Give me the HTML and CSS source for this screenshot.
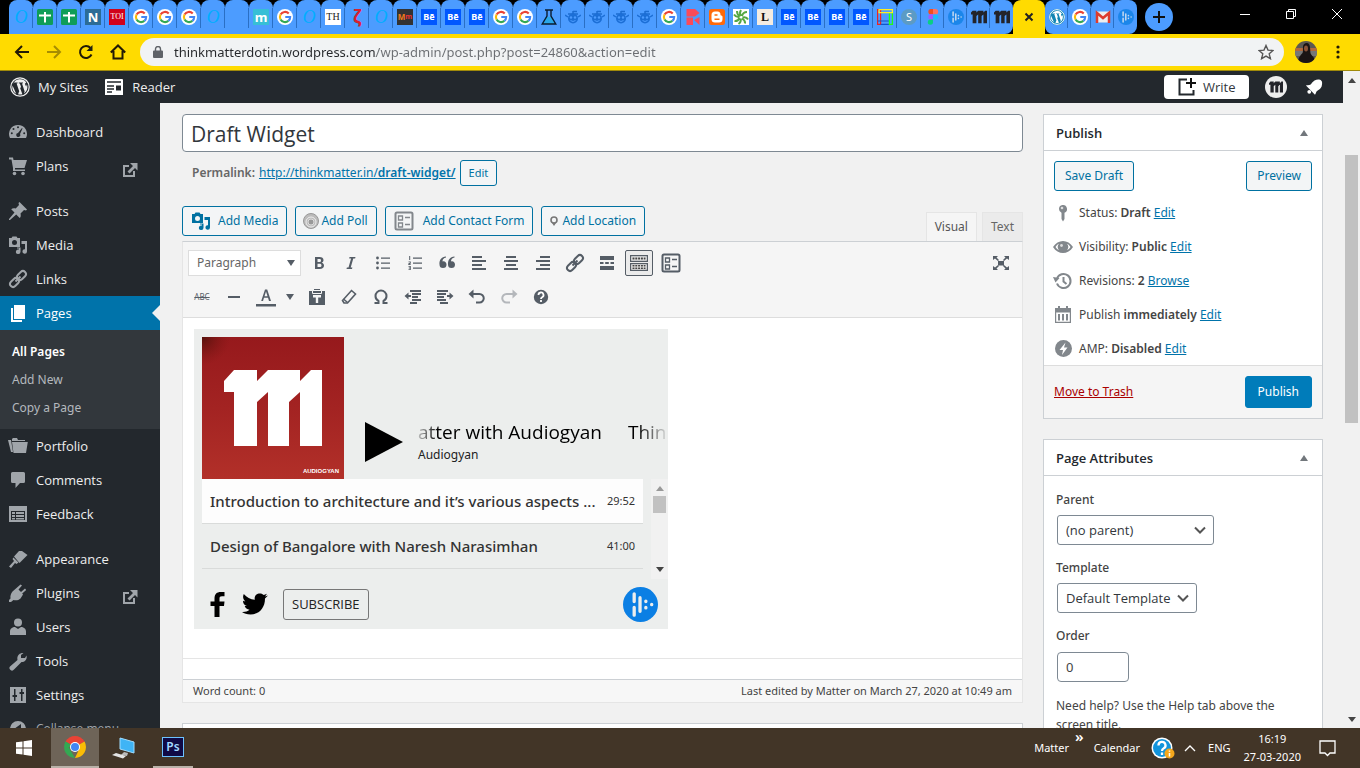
FILE: index.html
```html
<!DOCTYPE html>
<html lang="en">
<head>
<meta charset="utf-8">
<title>Edit Page</title>
<link rel="stylesheet" href="styles.css">
</head>
<body>
<svg class="sprite" aria-hidden="true">
  <symbol id="google" viewBox="0 0 18 18"><circle cx="9" cy="9" r="9" fill="#fff"/><g fill="none" stroke-width="2.4"><path d="M13.2 5A5.8 5.8 0 0 0 4 6.2" stroke="#ea4335"/><path d="M4 6.2a5.8 5.8 0 0 0 0 5.6" stroke="#fbbc05"/><path d="M4 11.8a5.8 5.8 0 0 0 8.8 1.6" stroke="#34a853"/><path d="M12.8 13.4A5.6 5.6 0 0 0 14.8 9H9.3" stroke="#4285f4"/></g></symbol>
  <symbol id="sheet" viewBox="0 0 16 16"><rect width="16" height="16" rx="1.5" fill="#0f9d58"/><path d="M2 6.500h12M8 3v10.500" stroke="#fff" stroke-width="2"/></symbol>
  <symbol id="robot" viewBox="0 0 16 16"><path d="M3 5h10M8 2.500h4M8 2v3" stroke="#1c6cd0" stroke-width="1.500"/><circle cx="8" cy="9.500" r="5" fill="#1c6fd6"/><path d="M0 6l3 2M16 6l-3 2" stroke="#1c6fd6" stroke-width="1.500"/><circle cx="6" cy="8.500" r="1.200" fill="#4c9cff"/><circle cx="10" cy="8.500" r="1.200" fill="#4c9cff"/><path d="M5.500 11.500q2.500 2 5 0" stroke="#4c9cff" fill="none"/></symbol>
  <symbol id="waves" viewBox="0 0 36 36"><circle cx="18" cy="18" r="18" fill="#0b7fe4"/><g class="wave-bars" stroke-width="3.400" stroke-linecap="round"><path d="M11.500 7v8M11.500 21v8M17.500 11v14M23.500 14.500v.5M23.500 21v.5M29.500 17.800v.4"/></g></symbol>
  <symbol id="mlogo" viewBox="22 33 98 76"><path d="M32 33h23v11l11-11h32v11l11-11h11v76H98V55L87 65v44H66V55L55 65v44H32V55H22V44z"/></symbol>
  <symbol id="wp" viewBox="0 0 20 20"><circle cx="10" cy="10" r="9.200" fill="none" stroke="currentColor" stroke-width="1.200"/><path d="M3 7.200A7.600 7.600 0 0 1 16.300 5.500C15 5.800 14.800 7 15.500 8.200c.9 1.600 1.100 2.400.4 4.600l-.9 2.600-3-9 1-.2v-.7H8.800v.7l1 .2 1.200 3.200-1.700 5-2.700-8.200 1-.2v-.7H3.600zM2.500 8.500l3.700 8.200A7.600 7.600 0 0 1 2.500 8.500zM10.200 11.200l2.200 6a8 8 0 0 1-4.300.1zM16.900 7.300c1.200 3.400.2 7.200-3 9.200z" fill="currentColor"/></symbol>
  <symbol id="media" viewBox="0 0 20 20"><path d="M1 3h2.500L4.500 1.500h4L9.500 3H12v9H1zM6.500 5a2.500 2.500 0 1 0 0 5 2.500 2.500 0 0 0 0-5z" fill="currentColor" fill-rule="evenodd"/><path d="M13.500 6H19v10.500a2.300 2.300 0 1 1-2-2.300V9h-3.500zM7 13.500h2v-1h3.500v4.300a2.300 2.300 0 1 1-1.600-2.200V13.500z" fill="currentColor"/></symbol>
  <symbol id="link" viewBox="0 0 20 20"><g fill="none" stroke="currentColor" stroke-width="2"><rect x="8.500" y="3.500" width="10" height="6" rx="3" transform="rotate(-45 13.500 6.500)"/><rect x="1.500" y="10.500" width="10" height="6" rx="3" transform="rotate(-45 6.500 13.500)"/><path d="M7.500 12.500l5-5"/></g></symbol>
  <symbol id="ext" viewBox="0 0 16 16"><path d="M7 4H2v10h10V9" fill="none" stroke="currentColor" stroke-width="2"/><path d="M8 1h7.500v7.500L13 6l-5.500 5.500-2-2L11 4z" fill="currentColor"/></symbol>
  <symbol id="form" viewBox="0 0 20 20"><rect x="1.500" y="1.500" width="17" height="17" rx="1.500" fill="none" stroke="currentColor" stroke-width="2"/><path d="M4.500 5h4v4h-4zM4.500 12h4v4h-4zM11 6.500h5M11 13.500h5" fill="none" stroke="currentColor" stroke-width="1.300"/></symbol>
  <symbol id="chev" viewBox="0 0 12 8"><path d="M1 1.500l5 5 5-5" fill="none" stroke="#555" stroke-width="2"/></symbol>
</svg>

<header class="browser">
  <nav class="tabs" aria-label="Browser tabs">
    <a class="tab" href="#"><i class="fav o">O</i></a><a class="tab" href="#"><svg class="fav"><use href="#sheet"/></svg></a><a class="tab" href="#"><svg class="fav"><use href="#sheet"/></svg></a><a class="tab" href="#"><i class="fav n">N</i></a><a class="tab" href="#"><i class="fav toi">TOI</i></a><a class="tab" href="#"><svg class="fav"><use href="#google"/></svg></a><a class="tab" href="#"><svg class="fav"><use href="#google"/></svg></a><a class="tab" href="#"><svg class="fav"><use href="#google"/></svg></a><a class="tab" href="#"><i class="fav o">O</i></a><a class="tab" href="#" aria-label="New tab"></a><a class="tab" href="#"><i class="fav em">m</i></a><a class="tab" href="#"><svg class="fav"><use href="#google"/></svg></a><a class="tab" href="#"><i class="fav o">O</i></a><a class="tab" href="#"><i class="fav th">TH</i></a><a class="tab" href="#"><i class="fav zeta">ζ</i></a><a class="tab" href="#"><i class="fav o">O</i></a><a class="tab" href="#"><i class="fav mm">M<small>m</small></i></a><a class="tab" href="#"><i class="fav be">Bē</i></a><a class="tab" href="#"><i class="fav be">Bē</i></a><a class="tab" href="#"><i class="fav be">Bē</i></a><a class="tab" href="#"><svg class="fav"><use href="#google"/></svg></a><a class="tab" href="#"><svg class="fav"><use href="#google"/></svg></a><a class="tab" href="#"><svg class="fav" viewBox="0 0 16 16"><path d="M4.500 8h7l3.500 7H1z" fill="#2aa7e8"/><path d="M4 1h8M6 1v6L1.200 15h13.600L10 7V1" fill="none" stroke="#0a1c30" stroke-width="1.400"/></svg></a><a class="tab" href="#"><svg class="fav"><use href="#robot"/></svg></a><a class="tab" href="#"><svg class="fav"><use href="#robot"/></svg></a><a class="tab" href="#"><svg class="fav"><use href="#robot"/></svg></a><a class="tab" href="#"><svg class="fav"><use href="#robot"/></svg></a><a class="tab" href="#"><svg class="fav"><use href="#google"/></svg></a><a class="tab" href="#"><svg class="fav" viewBox="0 0 16 16"><path d="M1.500 0H10l4.500 4L10 7.500H1.500zM1.500 8.500H8V16H1.500zM9 11l5.500-3v8z" fill="#fb4a59"/></svg></a><a class="tab" href="#"><svg class="fav" viewBox="0 0 16 16"><rect width="16" height="16" rx="2.500" fill="#ff6a0a"/><path d="M6 2.500h2.500A3 3 0 0 1 11.500 6c0 .8 2 0 2 2v2a3.500 3.500 0 0 1-3.500 3.500H6A3.500 3.500 0 0 1 2.500 10V6A3.500 3.500 0 0 1 6 2.500z" fill="#fff"/><path d="M5.500 6h3M5.500 10.200h5" stroke="#ff6a0a" stroke-width="1.600"/></svg></a><a class="tab" href="#"><svg class="fav" viewBox="0 0 16 16"><path fill="#fff" d="M0 0h16v16H0z"/><g fill="none" stroke="#55a842" stroke-width="2"><path d="M8 7Q6 4 8 1M9 7q1-4 5-4M9.500 8.500q4-1 5.500 2M9 9.500q3.500 2 3 5M7.500 9.500q1 3.500-2 5.500M6.500 9Q5 12.500 1.500 12M6.500 8Q3 8.500 1 5.500M7 7Q4 6 4 2"/></g></svg></a><a class="tab" href="#"><i class="fav el">L</i></a><a class="tab" href="#"><i class="fav be">Bē</i></a><a class="tab" href="#"><i class="fav be">Bē</i></a><a class="tab" href="#"><i class="fav be">Bē</i></a><a class="tab" href="#"><i class="fav be">Bē</i></a><a class="tab" href="#"><svg class="fav" viewBox="0 0 16 16" fill="none" stroke-width="1.200"><path d="M.6.6v14.800h3V.6z" stroke="#e22"/><path d="M.6 12h12M3.600 15.400h9" stroke="#15c"/><path d="M12.400 3.600h3v11.800h-3z" stroke="#2f1"/><path d="M2 .6h13.400v3H2z" stroke="#fe2"/></svg></a><a class="tab" href="#"><i class="fav es">S</i></a>
    <a class="tab narrow" href="#"><svg class="fav" viewBox="0 0 16 16"><path d="M8 0H6a2.600 2.600 0 0 0 0 5.300h2z" fill="#f24e1e"/><path d="M8 0h2.500a2.600 2.600 0 0 1 0 5.300H8z" fill="#ff7262"/><path d="M8 5.300H6a2.600 2.600 0 0 0 0 5.300h2z" fill="#a259ff"/><circle cx="10.500" cy="8" r="2.600" fill="#1abcfe"/><path d="M8 10.600H6A2.600 2.600 0 1 0 8 13z" fill="#0acf83"/></svg></a><a class="tab narrow" href="#"><svg class="fav dim"><use href="#waves"/></svg></a><a class="tab narrow" href="#"><svg class="fav dark"><use href="#mlogo"/></svg></a><a class="tab narrow last" href="#"><svg class="fav dark"><use href="#mlogo"/></svg></a>
    <a class="tab active" href="#" aria-label="Close tab"><svg class="closex" viewBox="0 0 10 10"><path d="M1.500 1.500l7 7M8.500 1.500l-7 7" stroke="#222" stroke-width="2"/></svg></a>
    <a class="tab narrow first" href="#"><i class="fav wpfav"><svg viewBox="0 0 20 20"><use href="#wp"/></svg></i></a><a class="tab narrow" href="#"><svg class="fav"><use href="#google"/></svg></a><a class="tab narrow" href="#"><svg class="fav" viewBox="0 0 16 16"><path d="M1 2.500h14v11H1z" fill="#eee"/><path d="M2 14V4l6 5 6-5v10" fill="none" stroke="#dd3b2e" stroke-width="2.500"/></svg></a><a class="tab narrow last" href="#"><svg class="fav dim"><use href="#waves"/></svg></a>
    <button class="newtab" aria-label="New tab"><svg viewBox="0 0 12 12"><path d="M6 0v12M0 6h12" stroke="#111" stroke-width="2"/></svg></button>
    <div class="winctl">
      <button aria-label="Minimize"><svg viewBox="0 0 12 12"><path d="M1 6.500h10"/></svg></button>
      <button aria-label="Restore"><svg viewBox="0 0 12 12"><path d="M1.500 3.500h7v7h-7zM3.500 3.500v-2h7v7h-2"/></svg></button>
      <button aria-label="Close"><svg viewBox="0 0 12 12"><path d="M1 1l10 10M11 1L1 11"/></svg></button>
    </div>
  </nav>
  <div class="navbar">
    <button aria-label="Back"><svg viewBox="0 0 16 16"><path d="M15 8H2M8 2L2 8l6 6"/></svg></button>
    <button class="off" aria-label="Forward"><svg viewBox="0 0 16 16"><path d="M1 8h13M8 2l6 6-6 6"/></svg></button>
    <button aria-label="Reload"><svg viewBox="0 0 16 16"><path d="M13.500 10.500A6 6 0 1 1 12.500 4"/><path d="M14.500 1v6h-6z" fill="#221" stroke="none"/></svg></button>
    <button aria-label="Home"><svg viewBox="0 0 16 16"><path d="M.8 8.500L8 1.500l7.200 7M3.500 7v7.500h9V7"/></svg></button>
    <div class="omnibox">
      <svg class="lock" viewBox="0 0 10 12"><path d="M1 4.500h8a1 1 0 0 1 1 1V11a1 1 0 0 1-1 1H1a1 1 0 0 1-1-1V5.500a1 1 0 0 1 1-1z" fill="#5f6368"/><path d="M2.500 5V3a2.500 2.500 0 0 1 5 0v2" fill="none" stroke="#5f6368" stroke-width="1.400"/></svg>
      <input class="url" aria-label="Address" value="thinkmatterdotin.wordpress.com/wp-admin/post.php?post=24860&amp;action=edit">
      <button class="star" aria-label="Bookmark"><svg viewBox="0 0 16 16"><path d="M8 1.500l2 4.600 5 .4-3.800 3.300 1.200 4.900L8 12.100l-4.400 2.600 1.200-4.900L1 6.500l5-.4z" fill="none" stroke="#555" stroke-width="1.400"/></svg></button>
    </div>
    <svg class="avatar" viewBox="0 0 22 22"><defs><clipPath id="av"><circle cx="11" cy="11" r="11"/></clipPath></defs><g clip-path="url(#av)"><path fill="#5c5852" d="M0 0h22v22H0z"/><path fill="#b3683a" d="M0 7h22v4H0z"/><path fill="#777" d="M0 10h22v5H0z"/><path fill="#1b1414" d="M3 22c0-6 3-8 4.500-10S6 3 11 2s4 7 4.500 10S20 15 20 22z"/><ellipse cx="11" cy="7.500" rx="2" ry="3" fill="#8b5237"/></g></svg>
    <button class="dots" aria-label="Menu"><svg viewBox="0 0 4 16"><circle cx="2" cy="3" r="1.600"/><circle cx="2" cy="8" r="1.600"/><circle cx="2" cy="13" r="1.600"/></svg></button>
  </div>
</header>

<div class="page">
<div class="site">
  <div class="adminbar">
    <a href="#"><svg class="ab-icon"><use href="#wp"/></svg>My Sites</a>
    <a href="#"><svg class="ab-icon reader" viewBox="0 0 18 16"><path d="M0 1q0-1 1-1h16q1 0 1 1v15H0z" fill="#fff"/><path d="M2 3h14M2 7h7M2 10h7M2 13h5" stroke="#23282d" stroke-width="1.300"/><path d="M11 6.500h5v5h-5z" fill="#23282d"/></svg>Reader</a>
    <a class="write" href="#"><svg viewBox="0 0 18 18"><path d="M9 1.500H1.500v15h14V12" fill="none" stroke="#23282d" stroke-width="2"/><path d="M13 0v10M8 5h10" stroke="#111" stroke-width="2"/></svg>Write</a>
    <a class="me" href="#" aria-label="Profile"><svg class="dark"><use href="#mlogo"/></svg></a>
    <a class="bell" href="#" aria-label="Notifications"><svg viewBox="0 0 20 20"><path d="M1 8l9.500 9.500c1-1 .8-2 1.500-3 1-1.500 4-2 5.500-5.500C18.500 5 18 3.500 17 2.500S13 1 10 2.500C7.500 4 7 6 5.500 7 4.200 7.800 2 7 1 8z" fill="#fff"/><circle cx="4.500" cy="14.500" r="2" fill="#fff"/></svg></a>
  </div>
  <div class="columns">
  <nav class="menu" aria-label="Main menu">
    <a href="#"><svg viewBox="0 0 20 20"><path fill-rule="evenodd" d="M2 16A9 9 0 1 1 18 16zM10 4.200a1 1 0 1 0 0 2 1 1 0 0 0 0-2zM5.500 6a1 1 0 1 0 0 2 1 1 0 0 0 0-2zM3.800 10.200a1 1 0 1 0 0 2 1 1 0 0 0 0-2zM16.200 10.200a1 1 0 1 0 0 2 1 1 0 0 0 0-2zM14 6l-4 5a2 2 0 1 0 2 1l2.500-5.500z"/></svg>Dashboard</a>
    <a href="#"><svg viewBox="0 0 20 20"><path d="M1 1.500h4L5.500 4H19l-2.500 8H7v1.500h10v1.500H5V12L3.500 3.500H1z"/><circle cx="6.500" cy="17.500" r="1.800"/><circle cx="15" cy="17.500" r="1.800"/></svg>Plans<svg class="out"><use href="#ext"/></svg></a>
    <hr>
    <a href="#"><svg viewBox="0 0 20 20"><path d="M11.500 1l7.500 7.500-1 1-2-.5-3.500 3.500c.5 2 .3 3.500-.8 4.500l-3.500-3.500L2 19H1v-1l5.500-6.500L3.200 8.200c1-1 2.500-1.300 4.500-.8L11 4l-.5-2z"/></svg>Posts</a>
    <a href="#"><svg><use href="#media"/></svg>Media</a>
    <a href="#"><svg><use href="#link"/></svg>Links</a>
    <a class="current" href="#"><svg viewBox="0 0 20 20"><path d="M6 2h11v14H6zM3 5h2v12h9v2H3z"/></svg>Pages</a>
    <div class="submenu"><a class="on" href="#">All Pages</a><a href="#">Add New</a><a href="#">Copy a Page</a></div>
    <a href="#"><svg viewBox="0 0 20 20"><path d="M0 4h3l.5 3L5 16H3zM4 6h15.800L18 17H5.500zM4 5V3l1-1h4l1 2h7v1z"/></svg>Portfolio</a>
    <a href="#"><svg viewBox="0 0 20 20"><path d="M4.500 2h11Q17 2 17 3.500v8q0 1.500-1.500 1.500H12l-4.500 5V13h-3Q3 13 3 11.500v-8Q3 2 4.500 2z"/></svg>Comments</a>
    <a href="#"><svg viewBox="0 0 20 20"><path fill-rule="evenodd" d="M1 2h18v16H1zM3 7h14v9H3z"/><path d="M4 8h3v2H4zM8 8h8v2H8zM4 11h3v2H4zM8 11h8v2H8zM4 14h3v1.500H4zM8 14h8v1.500H8z"/></svg>Feedback</a>
    <hr>
    <a href="#"><svg viewBox="0 0 20 20"><path d="M14 2l5.500 4-8 8L6 7.500 11 2zM5.500 8.500l5 5-2 1.500-1.500-1L3 19 1 17.500 6 12 4.500 10z"/></svg>Appearance</a>
    <a href="#"><svg viewBox="0 0 20 20"><path d="M12.500 1.500l1.500 1-3.500 4 2.500 2.500 4-3.500 1.200 1.500-4 3.500.8 1-2.500 4c-2 2-5 2-7 1.500L3 19H1v-2l1.500-1.500C2 13 3 10 4.500 8.500L8.500 5z"/></svg>Plugins<svg class="out"><use href="#ext"/></svg></a>
    <a href="#"><svg viewBox="0 0 20 20"><circle cx="10" cy="5.500" r="4"/><path d="M2 18v-3.500c0-3 2.500-4.500 5-4.500l3 2 3-2c2.500 0 5 1.500 5 4.500V18z"/></svg>Users</a>
    <a href="#"><svg viewBox="0 0 20 20"><path d="M17 7l1.500-2.500c.8 3-1 6.500-5 6.500l-7.500 7.500a2.200 2.200 0 0 1-4-3L9.500 9C8.500 4.500 12 1.500 15.500 2L13 4v3z"/></svg>Tools</a>
    <a href="#"><svg viewBox="0 0 20 20"><path fill-rule="evenodd" d="M2 2h16v16H2zM6 4v6H4.500v2H6v4h1.500v-4H9v-2H7.500V4zM13 4v3h-1.500v2H13v7h1.500V9H16V7h-1.500V4z"/></svg>Settings</a>
    <a class="collapse" href="#"><svg viewBox="0 0 20 20"><path fill-rule="evenodd" d="M10 2a8 8 0 1 1 0 16 8 8 0 0 1 0-16zM13 5v10l-7-5z"/></svg>Collapse menu</a>
  </nav>

  <main class="content">
    <section class="primary">
      <input class="title" aria-label="Title" value="Draft Widget">
      <div class="permalink"><b>Permalink:</b> <a href="#">http://thinkmatter.in/<b>draft-widget/</b></a> <button class="btn small">Edit</button></div>
      <div class="tools">
        <div class="inserts">
          <button class="btn"><svg class="i20"><use href="#media"/></svg>Add Media</button>
          <button class="btn"><svg class="i16" viewBox="0 0 16 16"><circle cx="8" cy="8" r="7.500" fill="#bbb" stroke="#999"/><circle cx="8" cy="9" r="5" fill="none" stroke="#eee"/><circle cx="8" cy="9" r="3" fill="#999" stroke="#ddd"/></svg>Add Poll</button>
          <button class="btn"><svg class="i20 grey"><use href="#form"/></svg>Add Contact Form</button>
          <button class="btn"><svg class="i8" viewBox="0 0 8 10"><circle cx="4" cy="4" r="3" fill="none" stroke="#777" stroke-width="1.600"/><path d="M2 7l2 3 2-3z" fill="#777"/></svg>Add Location</button>
        </div>
        <div class="modes"><button class="mode on">Visual</button><button class="mode">Text</button></div>
      </div>
      <div class="editor">
        <div class="toolbar">
          <div class="row">
            <span class="pick para"><select aria-label="Block format"><option>Paragraph</option></select><svg viewBox="0 0 8 6"><path d="M0 0h8L4 6z"/></svg></span>
            <button aria-label="Bold"><svg viewBox="0 0 20 20"><path d="M6 4v12h4.500c3 0 4.500-1.200 4.500-3.400 0-1.700-1-2.600-2.300-2.900 1.100-.4 1.800-1.300 1.800-2.600C14.500 5 13 4 10.500 4zm2.500 2h1.700c1.200 0 1.800.4 1.800 1.400S11.400 9 10.200 9H8.500zm0 4.800h2c1.400 0 2 .5 2 1.600s-.7 1.700-2 1.700h-2z" fill-rule="evenodd"/></svg></button>
            <button aria-label="Italic"><svg viewBox="0 0 20 20"><path d="M8.500 4h6l-.4 1.600h-1.800L9.700 14.400h1.700L11 16H5.500l.4-1.600h1.600l2.600-8.800H8.200z"/></svg></button>
            <button aria-label="Bulleted list"><svg viewBox="0 0 20 20"><circle cx="4.500" cy="5" r="1.400"/><circle cx="4.500" cy="10" r="1.400"/><circle cx="4.500" cy="15" r="1.400"/><path d="M8 4.500h9v1.200H8zM8 9.500h9v1.200H8zM8 14.500h9v1.200H8z"/></svg></button>
            <button aria-label="Numbered list"><svg viewBox="0 0 20 20"><path d="M8 4.500h9v1.200H8zM8 9.500h9v1.200H8zM8 14.500h9v1.200H8zM4.200 3h1v4h-1zM3.500 8.500h2.300v2L4.500 11.200h1.300v.8H3.300v-1.400l1.600-.8v-.5H3.500zM3.500 13h2.300v4H3.500v-.8h1.400v-.8H3.800v-.8h1.100v-.8H3.500z"/></svg></button>
            <button aria-label="Blockquote"><svg viewBox="0 0 20 20"><path d="M9 4.500C6.500 5 5.500 6.500 5.500 8.500c2-.8 4 .8 4 3a3.500 3.500 0 0 1-7 0C2 7 4.500 4 9 3.500zM17.500 4.500C15 5 14 6.500 14 8.500c2-.8 4 .8 4 3a3.500 3.500 0 0 1-7 0c-.3-4.500 2-7.500 6.500-8z"/></svg></button>
            <button aria-label="Align left"><svg viewBox="0 0 20 20"><path d="M3 3h10v2H3zM3 7h14v2H3zM3 11h10v2H3zM3 15h14v2H3z"/></svg></button>
            <button aria-label="Align center"><svg viewBox="0 0 20 20"><path d="M5 3h10v2H5zM3 7h14v2H3zM5 11h10v2H5zM3 15h14v2H3z"/></svg></button>
            <button aria-label="Align right"><svg viewBox="0 0 20 20"><path d="M7 3h10v2H7zM3 7h14v2H3zM7 11h10v2H7zM3 15h14v2H3z"/></svg></button>
            <button aria-label="Insert link"><svg><use href="#link"/></svg></button>
            <button aria-label="Read more"><svg viewBox="0 0 20 20"><path d="M3 3h14v4H3zM3 13h14v4H3zM3 9h3.500v2H3zM8.200 9h3.600v2H8.200zM13.500 9H17v2h-3.500z"/></svg></button>
            <button class="pressed" aria-label="Toolbar toggle"><svg viewBox="0 0 20 20"><path fill-rule="evenodd" d="M1 2h18v7H1zM2.200 3.200v4.600h15.600V3.200zM1 10h18v8H1zM2.200 11.200v5.600h15.600v-5.600z"/><path d="M3.500 5.500h13" stroke="#444" stroke-width="2" stroke-dasharray="2 .8"/><path d="M3.500 12.800h13M3.500 15.300h13" stroke="#444" stroke-width="1.600" stroke-dasharray="2 .8"/></svg></button>
            <button aria-label="Contact form"><svg><use href="#form"/></svg></button>
            <button class="end" aria-label="Fullscreen"><svg viewBox="0 0 20 20"><path d="M7 8h6v4.500H7zM2 3h5L5.500 4.500 8 7 7 8 4 5.500 2 7zM18 3h-5l1.500 1.500L12 7l1 1 3-2.500L18 7zM2 17h5l-1.500-1.500L8 13l-1-1-3 2.500L2 13zM18 17h-5l1.500-1.500L12 13l1-1 3 2.500 2-1.500z"/></svg></button>
          </div>
          <div class="row">
            <button class="abc" aria-label="Strikethrough"><s>ABC</s></button>
            <button aria-label="Horizontal line"><svg viewBox="0 0 20 20"><path d="M4 9h12v2H4z"/></svg></button>
            <button aria-label="Text color"><svg viewBox="0 0 20 20"><path d="M9 2.500h2.200L15 14h-2l-1-3.200H8L7 14H5.200zm1 2L8.500 9.300h3z" fill-rule="evenodd"/><path d="M0 17h20v2.500H0z"/></svg></button>
            <button class="thin" aria-label="Color menu"><svg viewBox="0 0 8 6"><path d="M0 0h8L4 6z"/></svg></button>
            <button aria-label="Paste as text"><svg viewBox="0 0 20 20"><path fill-rule="evenodd" d="M7 2h6v2h5v14H2V4h5zM6 8v2.500h2.800V16h2.400v-5.500H14V8z"/><path d="M5.500 3.500h9v3h-9z" stroke="#f5f5f5"/></svg></button>
            <button aria-label="Clear formatting"><svg viewBox="0 0 20 20"><path d="M12.500 3.500l4 3.500-8 9H5l-1.500-2.500z" fill="none" stroke="#555d66" stroke-width="1.600"/><path d="M4.500 12l4 3.500" fill="none" stroke="#555d66" stroke-width="1.500"/></svg></button>
            <button aria-label="Special character"><svg viewBox="0 0 20 20"><path d="M3.500 16h4v-2C5.500 13 4.500 11.500 4.500 9a5.500 5.500 0 0 1 11 0c0 2.500-1 4-3 5v2h4" fill="none" stroke="#555d66" stroke-width="2"/></svg></button>
            <button aria-label="Outdent"><svg viewBox="0 0 20 20"><path d="M7 3h11v2H7zM9 6h9v2H9zM9 9h6v2H9zM9 12h9v2H9zM7 15h7v2H7zM5.500 5.500V8H8v2H5.500v2.500L1.500 9z"/></svg></button>
            <button aria-label="Indent"><svg viewBox="0 0 20 20"><path d="M2 3h11v2H2zM2 6h9v2H2zM2 9h7v2H2zM2 12h9v2H2zM5 15h8v2H5zM14.500 5.500V8H12v2h2.500v2.500l4-3.500z"/></svg></button>
            <button aria-label="Undo"><svg viewBox="0 0 20 20"><path d="M6.500 2.500v9L1.500 7z"/><path d="M5 7h7.500a4.200 4.200 0 1 1 0 8.500H9" fill="none" stroke="#555d66" stroke-width="2"/></svg></button>
            <button class="faded" aria-label="Redo"><svg viewBox="0 0 20 20"><path d="M13.500 2.500v9l5-4.500z"/><path d="M15 7H7.500a4.200 4.200 0 1 0 0 8.500H11" fill="none" stroke="#555d66" stroke-width="2"/></svg></button>
            <button aria-label="Help"><svg viewBox="0 0 20 20"><circle cx="10" cy="10" r="7.200"/><path d="M7.500 8a2.500 2.500 0 1 1 3.600 2.200c-.8.400-1.100.8-1.100 1.800M10 13v2" fill="none" stroke="#fff" stroke-width="1.800"/></svg></button>
          </div>
        </div>
        <div class="canvas">
          <article class="widget">
            <div class="player">
              <svg class="art" viewBox="0 0 142 142"><defs><linearGradient id="red" x1="0" y1="0" x2="0" y2="1"><stop offset="0" stop-color="#96191c"/><stop offset=".5" stop-color="#a32322"/><stop offset="1" stop-color="#b23029"/></linearGradient><radialGradient id="shade" cx="0" cy="0" r=".2"><stop offset="0" stop-color="#451109" stop-opacity=".8"/><stop offset="1" stop-color="#7a1512" stop-opacity="0"/></radialGradient></defs><path fill="url(#red)" d="M0 0h142v142H0z"/><path fill="url(#shade)" d="M0 0h142v142H0z"/><path fill="#fff" d="M32 33h23v11l11-11h32v11l11-11h11v76H98V55L87 65v44H66V55L55 65v44H32V55H22V44z"/><text x="137" y="136" text-anchor="end">AUDIOGYAN</text></svg>
              <button class="play" aria-label="Play"><svg viewBox="0 0 38 40"><path d="M0 0l38 20L0 40z"/></svg></button>
              <div class="now"><div class="marquee"><span>atter with Audiogyan</span><span>Thin</span></div><div class="by">Audiogyan</div></div>
            </div>
            <div class="episodes">
              <div class="list">
                <a class="ep on" href="#"><span>Introduction to architecture and it’s various aspects ...</span><time>29:52</time></a>
                <a class="ep" href="#"><span>Design of Bangalore with Naresh Narasimhan</span><time>41:00</time></a>
              </div>
              <div class="sbar"><svg viewBox="0 0 8 5"><path d="M0 5h8L4 0z" fill="#999"/></svg><i></i><svg class="down" viewBox="0 0 8 5"><path d="M0 0h8L4 5z" fill="#444"/></svg></div>
            </div>
            <div class="share">
              <a href="#" aria-label="Facebook"><svg class="fb" viewBox="0 0 14 25"><path d="M4 25V14H0V9.500h4V6.500C4 2 6.500 0 10 0h4v4.300h-2.500C9.500 4.300 9 5 9 6.500v3h5L13.500 14H9v11z"/></svg></a>
              <a href="#" aria-label="Twitter"><svg class="tw" viewBox="0 0 26 22"><path d="M26 2.500l-3 3C23 15 17 21.500 8.500 21.500 5 21.500 2 20.500 0 19c3 .2 5.500-.5 7.500-2.200-2.500-.2-4-1.500-4.800-3.700h2.200C2.500 12.300 1 10.500 1 7.700l2.300.7C1 6.500.5 3.500 1.800 1c3 3.500 6.500 5.400 11 5.700C12 3 14.500.4 18 .4c1.500 0 2.800.6 3.800 1.600L25 .8l-2 2.600z"/></svg></a>
              <button class="subscribe">SUBSCRIBE</button>
              <svg class="brand"><use href="#waves"/></svg>
            </div>
          </article>
        </div>
        <div class="path"></div>
        <div class="status"><span>Word count: 0</span><span>Last edited by Matter on March 27, 2020 at 10:49 am</span></div>
      </div>
      <div class="box nextbox"></div>
    </section>

    <aside class="side">
      <section class="box">
        <h2>Publish<svg viewBox="0 0 8 6"><path d="M0 6h8L4 0z"/></svg></h2>
        <div class="pub">
          <div class="split"><button class="btn">Save Draft</button><button class="btn">Preview</button></div>
          <ul class="facts">
            <li><svg viewBox="0 0 20 20"><path d="M6 6a4 4 0 1 1 5.500 3.700V16L10 18.500 8.500 16V9.700A4 4 0 0 1 6 6z"/><circle cx="9" cy="5" r="1.300" fill="#ddd"/></svg>Status:&nbsp;<b>Draft</b>&nbsp;<a href="#">Edit</a></li>
            <li><svg viewBox="0 0 20 20"><path fill-rule="evenodd" d="M0 10c5-8 15-8 20 0-5 8-15 8-20 0zm2.500 0c1 1.500 2 2.500 3.500 3.200a5 5 0 0 1 0-6.400C4.500 7.500 3.500 8.500 2.500 10zm15 0c-1-1.500-2-2.500-3.500-3.200a5 5 0 0 1 0 6.400c1.500-.7 2.500-1.700 3.500-3.200z"/><circle cx="8.500" cy="8.500" r="1.400" fill="#ddd"/></svg>Visibility:&nbsp;<b>Public</b>&nbsp;<a href="#">Edit</a></li>
            <li><svg viewBox="0 0 20 20"><path d="M4 12.500a7 7 0 1 0 0-5M10.500 6v4.500l3 2.500" fill="none" stroke="#82878c" stroke-width="2"/><path d="M0 6l6.500 1-4 4.500z"/></svg>Revisions:&nbsp;<b>2</b>&nbsp;<a href="#">Browse</a></li>
            <li><svg viewBox="0 0 20 20"><path fill-rule="evenodd" d="M2 3h3V1h2v2h6V1h2v2h3v15H2zm1.200 4.500v9.300h13.600V7.500z"/><path d="M5 9h2v6.500H5zM9 9h2v6.500H9zM13 9h2v6.500h-2z"/></svg>Publish&nbsp;<b>immediately</b>&nbsp;<a href="#">Edit</a></li>
            <li><svg viewBox="0 0 20 20"><circle cx="10.500" cy="9.500" r="8.500"/><path d="M12.500 3.500L6.500 11H10l-1 5 5.500-7.500H11z" fill="#fff"/></svg>AMP:&nbsp;<b>Disabled</b>&nbsp;<a href="#">Edit</a></li>
          </ul>
        </div>
        <div class="actions"><a class="trash" href="#">Move to Trash</a><button class="btn primary-btn">Publish</button></div>
      </section>
      <section class="box">
        <h2>Page Attributes<svg viewBox="0 0 8 6"><path d="M0 6h8L4 0z"/></svg></h2>
        <div class="attrs">
          <label for="parent">Parent</label>
          <span class="pick wide"><select id="parent"><option>(no parent)</option></select><svg><use href="#chev"/></svg></span>
          <label for="tpl">Template</label>
          <span class="pick"><select id="tpl"><option>Default Template</option></select><svg><use href="#chev"/></svg></span>
          <label for="order">Order</label>
          <input id="order" class="order" value="0">
          <p>Need help? Use the Help tab above the screen title.</p>
        </div>
      </section>
    </aside>
  </main>
  </div>
</div>
<div class="scroll"><svg viewBox="0 0 8 5"><path d="M0 5h8L4 0z"/></svg><i></i><svg class="down" viewBox="0 0 8 5"><path d="M0 0h8L4 5z"/></svg></div>
</div>

<footer class="taskbar">
  <button class="start" aria-label="Start"><svg viewBox="0 0 16 16"><path d="M0 2.300L6.500 1.400v6.100H0zM7.500 1.200L16 0v7.500H7.500zM0 8.500h6.500v6.100L0 13.700zM7.500 8.500H16V16l-8.500-1.200z" fill="#fff"/></svg></button>
  <button class="task live" aria-label="Chrome"><svg viewBox="0 0 22 22"><path d="M11 11L1.500 5.500A11 11 0 0 1 20.500 5.500z" fill="#ea4335"/><path d="M11 11H1V5.500L1.500 5.500 6 13.500 11 22A11 11 0 0 1 1.500 5.500z" fill="#34a853"/><path d="M11 11l9.500-5.500A11 11 0 0 1 11 22l4-8.500z" fill="#fbbc05"/><path d="M11 6h9.700a11 11 0 0 0-.2-.5L11 3z" fill="#ea4335"/><circle cx="11" cy="11" r="5" fill="#fff"/><circle cx="11" cy="11" r="4" fill="#4285f4"/></svg></button>
  <button class="task" aria-label="This PC"><svg class="pc" viewBox="0 0 24 22"><path d="M8 1l14 4v11L8 12z" fill="#3fb4f5" stroke="#9fdcff"/><path d="M12 15l4 1-1 3-6-1z" fill="#bbb"/><path d="M4 16l10 3-3 2.500L0 18z" fill="#e4e4e4"/></svg></button>
  <button class="task ps" aria-label="Photoshop"><span>Ps</span></button>
  <span class="spring"></span>
  <a href="#">Matter</a><span class="more">»</span>
  <a href="#">Calendar</a>
  <svg class="help" viewBox="0 0 24 22"><circle cx="11" cy="11" r="10.500" fill="#fff"/><circle cx="11" cy="11" r="9" fill="#1294dc"/><path d="M7.500 8.500a3.500 3.500 0 1 1 5 3c-1 .5-1.500 1.200-1.500 2.500M11 15.500V18" fill="none" stroke="#fff" stroke-width="2.300"/><circle cx="18.500" cy="16.500" r="5" fill="#f5a71c"/><path d="M18.500 13.500v1.200M18.500 16v3.500" stroke="#fff" stroke-width="1.500"/></svg>
  <svg class="up" viewBox="0 0 12 8"><path d="M1 7l5-5 5 5" fill="none" stroke="#fff" stroke-width="1.300"/></svg>
  <span>ENG</span>
  <time class="clock">16:19<br>27-03-2020</time>
  <svg class="note" viewBox="0 0 17 17"><path d="M1 1h15v12h-5l-2.500 2.500L6 13H1z" fill="none" stroke="#fff" stroke-width="1.300"/></svg>
</footer>
</body>
</html>
```

FILE: styles.css
```css
* { box-sizing: border-box; }
body { margin: 0; height: 100vh; overflow: hidden; display: flex; flex-direction: column; font: 12px/20px "Noto Sans", "Open Sans", sans-serif; color: #444; background: #f1f1f1; }
button, input, select { font: inherit; color: inherit; margin: 0; }
button { padding: 0; border: 0; background: none; }
svg { flex: none; }
b { font-weight: 600; }
a { color: #0073aa; }
.sprite { position: absolute; width: 0; height: 0; }

/* browser frame */
.browser { flex: none; background: #000; }
.tabs { display: flex; height: 34px; padding-left: 9px; background: #000; }
.tab { flex: none; width: 24px; height: 34px; display: flex; align-items: center; justify-content: center; background: #4c9cff; border-radius: 8px 8px 0 0; text-decoration: none; background-image: linear-gradient(#2a6fc4, #2a6fc4); background-size: 1px 20px; background-repeat: no-repeat; background-position: right 8px; }
.tab.narrow { width: 23px; }
.tab.last { background-image: none; border-bottom-right-radius: 8px; }
.tab.first { border-bottom-left-radius: 8px; }
.tab.active { width: 32px; background: #ffdb00; }
.fav { width: 16px; height: 16px; flex: none; display: flex; align-items: center; justify-content: center; font-style: normal; font-weight: 700; line-height: 16px; }
.closex { width: 10px; height: 10px; }
.fav.o { font: italic 18px/20px "Liberation Serif", serif; color: #00aeff; }
.fav.n { background: #2c6c96; color: #fff; font-size: 13px; }
.fav.toi { background: #d0021b; color: #fff; font: 8px/16px "Liberation Serif", serif; }
.fav.em { background: #37bfd6; color: #fff; font-size: 13px; }
.fav.th { background: #fff; color: #222; font: 10px/16px "Liberation Serif", serif; }
.fav.zeta { color: #d8202f; font-size: 17px; line-height: 24px; }
.fav.mm { background: #333; color: #f27a1a; font-size: 8px; }
.fav.mm small { font-size: 7px; color: #e33; }
.fav.be { background: #0057ff; color: #fff; font-size: 9px; }
.fav.el { background: #f4ece1; color: #111; font: bold 12px/16px "Liberation Serif", serif; }
.fav.es { background: #5c9bc5; color: #fff; font-size: 11px; border-radius: 8px; font-weight: 400; }
.fav.wpfav { background: #1286b3; color: #fff; border-radius: 8px; }
.wpfav svg { width: 16px; height: 16px; }
.wave-bars { fill: none; stroke: #eceeed; }
.dim { opacity: .75; }
.dark { fill: #23242a; }
.newtab { width: 28px; height: 28px; margin: 3px 0 0 8px; border-radius: 14px; background: #4c9cff; display: grid; place-items: center; }
.newtab svg { width: 12px; height: 12px; }
.winctl { margin-left: auto; display: flex; height: 28px; }
.winctl button { width: 46px; display: grid; place-items: center; }
.winctl svg { width: 12px; height: 12px; fill: none; stroke: #fff; }
.navbar { display: flex; align-items: center; height: 37px; padding: 0 12px 0 6px; background: #ffdb00; border-bottom: 1px solid #a08a0a; }
.navbar button { width: 32px; height: 28px; display: grid; place-items: center; }
.navbar svg { width: 16px; height: 16px; fill: none; stroke: #221a05; stroke-width: 2; }
.navbar .off { opacity: .4; }
.omnibox { flex: 1; display: flex; align-items: center; height: 28px; margin-left: 6px; padding-left: 13px; background: #f1f3f4; border-radius: 14px; }
.omnibox .lock { width: 10px; height: 12px; stroke: none; }
.url { flex: 1; min-width: 0; height: 26px; margin-left: 11px; padding: 0; border: 0; outline: 0; font-size: 13px; -webkit-text-fill-color: transparent; background: linear-gradient(90deg, #26282b 202px, #6b6e72 202px); -webkit-background-clip: text; background-clip: text; }
.navbar .star { width: 36px; }
.navbar .avatar { width: 22px; height: 22px; margin-left: 11px; stroke: none; }
.navbar .dots { width: 20px; margin-left: 11px; }
.navbar .dots svg { width: 4px; fill: #221a05; stroke: none; }

/* page frame */
.page { flex: 1; min-height: 0; display: flex; overflow: hidden; }
.site { flex: 1; min-width: 0; display: flex; flex-direction: column; }
.scroll { flex: none; width: 17px; background: #f1f1f1; display: flex; flex-direction: column; align-items: center; padding: 7px 0 6px; }
.scroll svg { width: 8px; height: 5px; fill: #444; }
.scroll i { width: 13px; height: 268px; margin-top: 72px; background: #c1c1c1; }
.scroll .down { margin-top: auto; }
.adminbar { flex: none; display: flex; align-items: center; height: 32px; padding: 0 19px 0 10px; background: #23282d; font: 13px/20px "Open Sans", sans-serif; }
.adminbar a { display: flex; align-items: center; color: #eee; text-decoration: none; margin-right: 17px; }
.ab-icon { width: 20px; height: 20px; margin-right: 8px; }
.ab-icon.reader { width: 18px; height: 16px; margin-right: 9px; }
.adminbar .write { margin-left: auto; margin-right: 16px; width: 85px; height: 24px; padding-left: 14px; gap: 7px; background: #fff; border-radius: 4px; color: #32373c; }
.write svg { width: 18px; height: 18px; }
.adminbar .me { width: 22px; height: 22px; margin-right: 18px; justify-content: center; border-radius: 11px; background: #eee; }
.me svg { width: 14px; height: 12px; }
.adminbar .bell { margin: 0; }
.bell svg { width: 19px; height: 19px; }
.columns { flex: 1; min-height: 0; display: flex; overflow: hidden; }

/* side menu */
.menu { flex: none; width: 160px; padding-top: 12px; background: #23282d; overflow: hidden; font-family: "Open Sans", sans-serif; }
.menu > a { display: flex; align-items: center; height: 34px; padding-left: 8px; gap: 8px; color: #eee; font-size: 13px; text-decoration: none; position: relative; }
.menu svg { width: 20px; height: 20px; fill: #a0a5aa; color: #a0a5aa; }
.menu .out { width: 16px; height: 16px; margin: 8px 22px 0 auto; }
.menu hr { height: 11px; margin: 0; border: 0; }
.menu .current { background: #0073aa; color: #fff; }
.menu .current svg { fill: #fff; }
.current::after { content: ""; position: absolute; right: 0; border: 8px solid transparent; border-right-color: #f1f1f1; border-left: 0; }
.submenu { display: flex; flex-direction: column; padding: 8px 0 7px; background: #32373c; font-family: "Noto Sans", sans-serif; }
.submenu a { height: 28px; line-height: 28px; padding-left: 12px; color: #b4b9be; text-decoration: none; }
.submenu .on { color: #fff; font-weight: 600; }
.menu .collapse { color: #a0a5aa; font-size: 12px; }

/* editing column */
.content { flex: 1; min-width: 0; display: flex; gap: 20px; padding: 11px 20px 0 22px; overflow: hidden; }
.primary { flex: 1; min-width: 0; }
.title { display: block; width: 100%; height: 38px; padding: 2px 8px 0; border: 1px solid #7e8993; border-radius: 4px; background: #fff; color: #32373c; font: 21px/30px "Open Sans", sans-serif; }
.permalink { height: 26px; margin: 8px 0 20px 10px; display: flex; align-items: center; gap: 4px; color: #666; }
.btn { height: 30px; padding: 0 10px; display: flex; align-items: center; border: 1px solid #0071a1; border-radius: 3px; background: #f3f5f6; color: #0071a1; white-space: nowrap; }
.btn.small { height: 26px; padding: 0 8px; font-size: 11px; }
.tools { display: flex; justify-content: space-between; height: 35px; }
.inserts { display: flex; gap: 8px; }
.inserts .btn { padding: 0 8px; }
.btn svg { margin-right: 7px; }
.btn .i20 { width: 20px; height: 20px; }
.btn .i16 { width: 16px; height: 16px; margin: 0 2px 0 -1px; }
.btn .i8 { width: 8px; height: 10px; margin-right: 4px; }
.btn .grey { color: #82878c; margin-right: 9px; }
.modes { display: flex; gap: 5px; align-items: flex-end; }
.mode { height: 29px; padding: 0 8px; border: 1px solid #e5e5e5; border-bottom: 0; background: #ebebeb; color: #666; }
.mode.on { background: #f5f5f5; color: #555; }
.editor { border: 1px solid #e5e5e5; border-top-color: #ccd0d4; background: #fff; }
.toolbar { padding: 8px 5px 7px; background: #f5f5f5; border-bottom: 1px solid #ddd; display: grid; gap: 8px; }
.row { display: flex; gap: 4px; height: 26px; }
.row button { width: 28px; display: grid; place-items: center; color: #555d66; border-radius: 2px; }
.row button svg { width: 20px; height: 20px; fill: #555d66; }
.row .thin { width: 19px; margin-left: -4px; }
.row .thin svg { width: 8px; height: 6px; }
.row .pressed { border: 1px solid #555d66; background: #ebebeb; }
.row .end { margin-left: auto; margin-right: 2px; }
.row .abc { font-size: 8px; }
.row .faded { opacity: .4; }
.pick { position: relative; display: flex; align-items: center; width: 140px; height: 30px; color: #32373c; }
.pick select { width: 100%; height: 100%; padding: 0 8px; appearance: none; border: 1px solid #7e8993; border-radius: 3px; background: #fff; }
.pick svg { position: absolute; right: 8px; width: 12px; height: 8px; pointer-events: none; }
.pick.wide { width: 157px; }
.pick.para { width: 113px; height: 26px; }
.pick.para select { border-color: #ddd; border-radius: 0; color: #666; }
.pick.para svg { right: 6px; width: 8px; height: 6px; fill: #555d66; }
.canvas { height: 340px; padding: 11px; }
.path { height: 21px; border-top: 1px solid #e5e5e5; }
.status { display: flex; justify-content: space-between; height: 23px; padding: 0 10px; align-items: center; background: #f7f7f7; border-top: 1px solid #ccd0d4; font-size: 11px; }
.nextbox { margin-top: 20px; height: 60px; }

/* podcast widget */
.widget { width: 474px; height: 300px; max-width: 100%; padding: 8px 0 0 8px; background: #eceeed; color: #000; }
.player { display: flex; height: 142px; }
.art { width: 142px; height: 142px; }
.art text { font: bold 6px "Liberation Sans Narrow", "Liberation Sans", sans-serif; fill: #fff; }
.play { align-self: flex-start; margin: 85px 15px 0 21px; }
.play svg { display: block; width: 38px; height: 40px; }
.now { flex: 1; min-width: 0; margin: 81px 2px 0 0; }
.marquee { display: flex; gap: 26px; overflow: hidden; white-space: nowrap; font: 19px/28px "Open Sans", sans-serif; -webkit-mask-image: linear-gradient(90deg, rgba(0,0,0,.2), #000 20px, #000 220px, rgba(0,0,0,.1)); mask-image: linear-gradient(90deg, rgba(0,0,0,.2), #000 20px, #000 220px, rgba(0,0,0,.1)); }
.by { line-height: 18px; color: #222; }
.episodes { display: flex; justify-content: space-between; height: 100px; }
.list { width: 441px; }
.ep { display: flex; align-items: center; height: 45px; padding: 0 8px; gap: 6px; border-bottom: 1px solid #d9dbda; color: #333; text-decoration: none; font: 15px/20px "Noto Sans", sans-serif; }
.ep span { flex: 1; white-space: nowrap; font-weight: 500; }
.ep time { font-size: 11px; }
.ep.on { background: #fdfdfd; }
.sbar { width: 17px; padding: 7px 0 7px; display: flex; flex-direction: column; align-items: center; background: #f1f1f1; }
.sbar svg { width: 8px; height: 5px; }
.sbar i { width: 13px; height: 17px; margin-top: 5px; background: #c1c1c1; }
.sbar .down { margin-top: auto; }
.share { display: flex; align-items: center; height: 50px; padding: 0 10px 0 8px; }
.share a { display: flex; }
.fb { width: 15px; height: 25px; }
.tw { width: 26px; height: 22px; margin-left: 17px; }
.subscribe { height: 31px; margin-left: 15px; padding: 0 8px; border: 1px solid #777; border-radius: 3px; color: #222; font: 13px/20px "Open Sans", sans-serif; }
.brand { width: 35px; height: 35px; margin-left: auto; }

/* right column */
.side { flex: none; width: 280px; }
.box { background: #fff; border: 1px solid #ccd0d4; }
.side .box { margin-bottom: 20px; }
.box h2 { display: flex; align-items: center; justify-content: space-between; height: 36px; margin: 0; padding: 0 14px 0 12px; border-bottom: 1px solid #ccd0d4; font: 600 13px/20px "Open Sans", sans-serif; color: #23282d; }
.box h2 svg { width: 8px; height: 6px; fill: #72777c; }
.pub { height: 214px; padding: 10px 10px 0; }
.split { display: flex; justify-content: space-between; }
.facts { list-style: none; margin: 5px 0 0; padding: 0; }
.facts li { display: flex; align-items: center; height: 34px; }
.facts svg { width: 20px; height: 20px; margin: 0 6px 0 -1px; fill: #82878c; }
.actions { display: flex; align-items: center; justify-content: space-between; height: 53px; padding: 0 10px; background: #f5f5f5; border-top: 1px solid #ddd; }
.trash { color: #a00; }
.primary-btn { height: 32px; padding: 0 12px; background: #007cba; border-color: #007cba; color: #fff; }
.attrs { padding: 14px 12px; }
.attrs label { display: block; margin-bottom: 5px; font-weight: 500; }
.attrs .pick { margin: 0 0 13px 1px; font: 13px/20px "Open Sans", sans-serif; }
.order { display: block; width: 72px; height: 30px; margin: 6px 0 0 1px; padding: 0 8px; border: 1px solid #7e8993; border-radius: 4px; font-size: 13px; }
.attrs p { margin: 14px 0; line-height: 19px; }

/* taskbar */
.taskbar { flex: none; display: flex; align-items: center; height: 40px; padding-right: 24px; background: #423527; color: #fff; font-size: 11px; }
.taskbar a { color: #fff; text-decoration: none; }
.start { width: 48px; height: 40px; display: grid; place-items: center; }
.start svg { width: 16px; height: 16px; }
.task { width: 44px; height: 40px; margin-left: 3px; display: grid; place-items: center; }
.task.live { width: 48px; background: #6e6458; border-bottom: 2px solid #b9b2a9; }
.task svg { width: 22px; height: 22px; }
.task .pc { width: 24px; }
.task.ps { width: 40px; margin-left: 7px; border-bottom: 2px solid #b9b2a9; }
.ps span { width: 22px; height: 20px; border: 1px solid #6cc2ff; background: #100a45; color: #a4d9ff; font-size: 12px; line-height: 17px; font-weight: 600; }
.spring { flex: 1; }
.more { align-self: flex-start; margin: 0 10px 0 6px; font-size: 15px; line-height: 16px; font-weight: 600; }
.help { width: 24px; height: 22px; margin-left: 11px; }
.up { width: 12px; height: 8px; margin: 0 12px 0 9px; }
.clock { margin: 0 18px 0 13px; line-height: 18px; text-align: center; }
.note { width: 17px; height: 17px; }
```
